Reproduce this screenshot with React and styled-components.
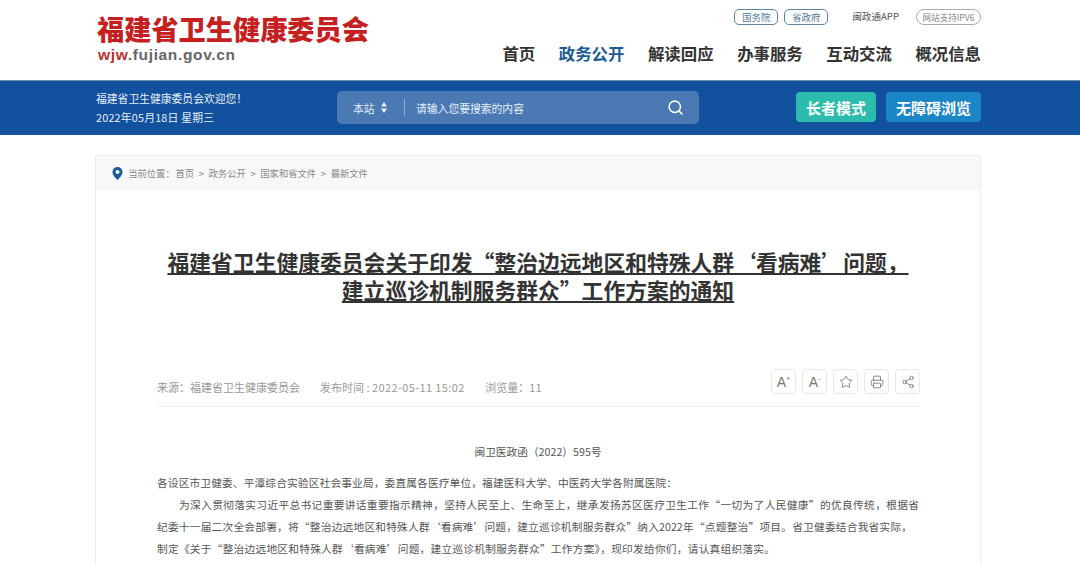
import React from "react";
import styled, { createGlobalStyle } from "styled-components";
import { Search, Star, Printer, Share2 } from "lucide-react";

const GlobalStyle = createGlobalStyle`
  html, body {
    margin: 0;
    padding: 0;
    background: #fff;
    overflow: hidden;
    height: 566px;
    font-family: "Noto Sans CJK SC", "Liberation Sans", sans-serif;
  }
`;

const Page = styled.div`
  width: 1080px;
  height: 566px;
  overflow: hidden;
`;

const Wrap = styled.div`
  width: 885px;
  margin: 0 auto 0 96px;
  display: flex;
  justify-content: space-between;
  align-items: flex-start;
`;

const Header = styled.header`
  height: 80px;
  background: #fff;
`;

const Logo = styled.div`
  padding-top: 11px;
  padding-left: 1px;
`;

const LogoName = styled.div`
  font-weight: 900;
  font-size: 27.2px;
  line-height: 34px;
  color: #c5201f;
  white-space: nowrap;
`;

const LogoUrl = styled.div`
  margin-top: 1px;
  padding-left: 1px;
  font-family: "Liberation Sans", sans-serif;
  font-size: 15.5px;
  line-height: 18px;
  font-weight: 700;
  letter-spacing: 0.65px;
  color: #666;
  span {
    color: #b5332f;
  }
`;

const HeaderRight = styled.div`
  display: flex;
  flex-direction: column;
  align-items: flex-end;
`;

const TopLinks = styled.div`
  display: flex;
  align-items: center;
  height: 16px;
  margin-top: 9px;
`;

const Pill = styled.span`
  box-sizing: border-box;
  width: ${(p) => p.$w}px;
  height: 16px;
  margin-left: ${(p) => p.$ml || 0}px;
  border: 1px solid ${(p) => (p.$grey ? "#aaa" : "#5d86a3")};
  border-radius: ${(p) => (p.$grey ? "8px" : "5px")};
  display: flex;
  align-items: center;
  justify-content: center;
  font-size: ${(p) => (p.$grey ? "8.6px" : "9.4px")};
  color: ${(p) => (p.$grey ? "#888" : "#4e7b99")};
  white-space: nowrap;
`;

const AppLink = styled.span`
  margin-left: 24px;
  margin-top: -2px;
  font-size: 9.6px;
  color: #555;
  white-space: nowrap;
`;

const Nav = styled.nav`
  display: flex;
  gap: 23.6px;
  margin-top: 16px;
`;

const NavItem = styled.a`
  font-size: 16.4px;
  line-height: 24px;
  font-weight: 700;
  color: ${(p) => (p.$active ? "#1c5b96" : "#333")};
  white-space: nowrap;
`;

const Banner = styled.div`
  height: 55px;
  border-top: 1px solid #6d8fa8;
  background: #11519e;
  box-sizing: border-box;
  display: flex;
  align-items: center;
`;

const BannerInner = styled.div`
  width: 885px;
  margin-left: 96px;
  display: flex;
  align-items: center;
`;

const Welcome = styled.div`
  width: 241px;
  color: #e6eef7;
  font-size: 10.8px;
  line-height: 19px;
  white-space: nowrap;
`;

const Today = styled.span`
  letter-spacing: 0.2px;
`;

const SearchBox = styled.div`
  box-sizing: border-box;
  width: 362px;
  height: 33px;
  margin-top: -1px;
  border-radius: 5px;
  background: #4a79b4;
  display: flex;
  align-items: center;
  padding-left: 16px;
  color: #e8eff8;
  font-size: 10.8px;
  white-space: nowrap;
`;

const Scope = styled.span`
  display: flex;
  align-items: center;
  gap: 6px;
  width: 51px;
  height: 17px;
  border-right: 1px solid #8fb0d6;
`;

const Updown = styled.svg`
  width: 6px;
  height: 11px;
  fill: #e8eff8;
`;

const Placeholder = styled.span`
  margin-left: 11px;
  flex: 1;
`;

const SearchIcon = styled(Search)`
  width: 17px;
  height: 17px;
  margin-right: 15px;
  color: #fff;
`;

const ModeButtons = styled.div`
  display: flex;
  gap: 10px;
  margin-left: auto;
  margin-top: -2px;
`;

const ModeButton = styled.span`
  box-sizing: border-box;
  width: ${(p) => p.$w}px;
  height: 30px;
  border-radius: 4px;
  background: ${(p) => p.$bg};
  color: #fff;
  font-size: 15px;
  font-weight: 700;
  display: flex;
  align-items: center;
  justify-content: center;
  white-space: nowrap;
`;

const Card = styled.main`
  box-sizing: border-box;
  width: 886px;
  margin: 20px 0 0 95px;
  border: 1px solid #eee;
  border-bottom: 0;
  height: 420px;
`;

const Crumbs = styled.div`
  height: 34px;
  background: #f8f8f8;
  display: flex;
  align-items: center;
  gap: 4.7px;
  padding-left: 16px;
  font-size: 9.3px;
  color: #888;
  white-space: nowrap;
`;

const Here = styled.span`
  margin-right: -4px;
`;

const PinIcon = styled.svg`
  width: 11px;
  height: 13px;
  margin-right: 0.5px;
  fill: #1b5c9e;
`;

const Article = styled.article`
  padding: 57.5px 61px 0;
`;

const Title = styled.h1`
  margin: 0;
  font-size: 21.8px;
  line-height: 28.8px;
  font-weight: 700;
  color: #333;
  text-align: center;
  text-decoration: underline;
  text-underline-offset: 2px;
`;

const MetaRow = styled.div`
  margin-top: 64px;
  height: 25px;
  padding-bottom: 12px;
  border-bottom: 1px solid #eee;
  display: flex;
  align-items: center;
  font-size: 11px;
  color: #999;
  white-space: nowrap;
`;

const MetaItem = styled.span`
  padding-top: 10px;
  margin-right: ${(p) => p.$mr || 0}px;
`;

const DateValue = styled.span`
  letter-spacing: 0.4px;
`;

const Tools = styled.div`
  margin-left: auto;
  margin-right: -1px;
  display: flex;
  gap: 6px;
`;

const Tool = styled.span`
  box-sizing: border-box;
  width: 25px;
  height: 25px;
  border: 1px solid #e8e8e8;
  border-radius: 4px;
  display: flex;
  align-items: center;
  justify-content: center;
  color: #777;
  font-family: "Liberation Sans", sans-serif;
  font-size: 14px;
  svg {
    width: 14px;
    height: 14px;
  }
  sup {
    font-size: 7px;
    line-height: 7px;
    margin-top: -6px;
  }
`;

const DocNo = styled.p`
  margin: 34px 0 9px;
  font-size: 10.7px;
  line-height: 22px;
  text-align: center;
  color: #555;
`;

const Body = styled.div`
  font-size: 10.7px;
  line-height: 22px;
  color: #555;
`;

// the original breaks these lines by hand, each one is stretched to its own width
const Line = styled.div`
  width: ${(p) => p.$w}px;
  margin-left: ${(p) => p.$indent || 0}px;
  text-align-last: justify;
  white-space: nowrap;
`;

const navItems = ["首页", "政务公开", "解读回应", "办事服务", "互动交流", "概况信息"];
const crumbs = ["首页", "政务公开", "国家和省文件", "最新文件"];

const App = () => (
  <Page>
    <GlobalStyle />
    <Header>
      <Wrap>
        <Logo>
          <LogoName>福建省卫生健康委员会</LogoName>
          <LogoUrl>
            <span>wjw</span>.fujian.gov.cn
          </LogoUrl>
        </Logo>
        <HeaderRight>
          <TopLinks>
            <Pill $w={44}>国务院</Pill>
            <Pill $w={44} $ml={6}>省政府</Pill>
            <AppLink>闽政通APP</AppLink>
            <Pill $w={65} $ml={17} $grey>网站支持IPV6</Pill>
          </TopLinks>
          <Nav>
            {navItems.map((n) => (
              <NavItem key={n} $active={n === "政务公开"}>{n}</NavItem>
            ))}
          </Nav>
        </HeaderRight>
      </Wrap>
    </Header>

    <Banner>
      <BannerInner>
        <Welcome>
          福建省卫生健康委员会欢迎您！
          <br />
          <Today>2022年05月18日 星期三</Today>
        </Welcome>
        <SearchBox>
          <Scope>
            本站
            <Updown viewBox="0 0 6 11">
              <path d="M3 0l3 4.5H0zM3 11L0 6.5h6z" />
            </Updown>
          </Scope>
          <Placeholder>请输入您要搜索的内容</Placeholder>
          <SearchIcon strokeWidth={2.2} />
        </SearchBox>
        <ModeButtons>
          <ModeButton $w={80} $bg="#2bbcae">长者模式</ModeButton>
          <ModeButton $w={95} $bg="#1a86c8">无障碍浏览</ModeButton>
        </ModeButtons>
      </BannerInner>
    </Banner>

    <Card>
      <Crumbs>
        <PinIcon viewBox="0 0 11 13">
          <path fillRule="evenodd" d="M5.5 0A5 5 0 0 1 10.5 5c0 3.2-3.2 6.2-5 8-1.8-1.8-5-4.800-5-8a5 5 0 0 1 5-5zm0 3a2 2 0 1 0 0 4 2 2 0 0 0 0-4z" />
        </PinIcon>
        <Here>当前位置：</Here>
        {crumbs.map((c, i) => (
          <React.Fragment key={c}>
            {i > 0 && <span>&gt;</span>}
            <span>{c}</span>
          </React.Fragment>
        ))}
      </Crumbs>
      <Article>
        <Title>
          福建省卫生健康委员会关于印发“整治边远地区和特殊人群‘看病难’问题，
          <br />
          建立巡诊机制服务群众”工作方案的通知
        </Title>
        <MetaRow>
          <MetaItem $mr={20}>来源：福建省卫生健康委员会</MetaItem>
          <MetaItem $mr={20.5}>发布时间 : <DateValue>2022-05-11 15:02</DateValue></MetaItem>
          <MetaItem>浏览量：11</MetaItem>
          <Tools>
            <Tool>A<sup>+</sup></Tool>
            <Tool>A<sup>-</sup></Tool>
            <Tool><Star strokeWidth={1.5} /></Tool>
            <Tool><Printer strokeWidth={1.5} /></Tool>
            <Tool><Share2 strokeWidth={1.5} /></Tool>
          </Tools>
        </MetaRow>
        <DocNo>闽卫医政函（2022）595号</DocNo>
        <Body>
          <Line $w={520}>各设区市卫健委、平潭综合实验区社会事业局，委直属各医疗单位，福建医科大学、中医药大学各附属医院：</Line>
          <Line $w={740} $indent={22}>为深入贯彻落实习近平总书记重要讲话重要指示精神，坚持人民至上、生命至上，继承发扬苏区医疗卫生工作“一切为了人民健康”的优良传统，根据省</Line>
          <Line $w={755}>纪委十一届二次全会部署，将“整治边远地区和特殊人群‘看病难’问题，建立巡诊机制服务群众”纳入2022年“点题整治”项目。省卫健委结合我省实际，</Line>
          <Line $w={618}>制定《关于“整治边远地区和特殊人群‘看病难’问题，建立巡诊机制服务群众”工作方案》，现印发给你们，请认真组织落实。</Line>
        </Body>
      </Article>
    </Card>
  </Page>
);

export default App;
